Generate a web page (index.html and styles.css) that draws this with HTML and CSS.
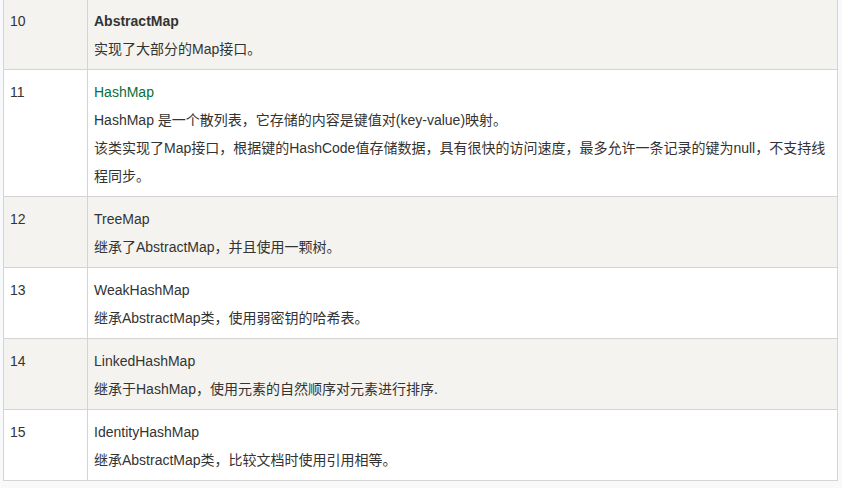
FILE: index.html
```html
<!DOCTYPE html>
<html lang="zh-CN">
<head>
<meta charset="utf-8">
<title>Map</title>
<link rel="stylesheet" href="styles.css">
</head>
<body>
<table class="reference">
  <tr class="odd">
    <td class="num">10</td>
    <td class="desc"><div class="name bold">AbstractMap</div><div>实现了大部分的Map接口。</div></td>
  </tr>
  <tr>
    <td class="num">11</td>
    <td class="desc"><div class="name green">HashMap</div><div>HashMap 是一个散列表，它存储的内容是键值对(key-value)映射。</div><div>该类实现了Map接口，根据键的HashCode值存储数据，具有很快的访问速度，最多允许一条记录的键为null，不支持线程同步。</div></td>
  </tr>
  <tr class="odd">
    <td class="num">12</td>
    <td class="desc"><div class="name">TreeMap</div><div>继承了AbstractMap，并且使用一颗树。</div></td>
  </tr>
  <tr>
    <td class="num">13</td>
    <td class="desc"><div class="name">WeakHashMap</div><div>继承AbstractMap类，使用弱密钥的哈希表。</div></td>
  </tr>
  <tr class="odd">
    <td class="num">14</td>
    <td class="desc"><div class="name">LinkedHashMap</div><div>继承于HashMap，使用元素的自然顺序对元素进行排序.</div></td>
  </tr>
  <tr>
    <td class="num">15</td>
    <td class="desc"><div class="name">IdentityHashMap</div><div>继承AbstractMap类，比较文档时使用引用相等。</div></td>
  </tr>
</table>
</body>
</html>
```
FILE: styles.css
```css
html, body {
  margin: 0;
  padding: 0;
  background: #f8f9fb;
}
body {
  font-family: "Liberation Sans", "Noto Sans CJK SC", sans-serif;
  font-size: 14px;
  color: #333;
  overflow: hidden;
}
.reference {
  margin: -2px 0 0 3px;
  width: 835px;
  border-collapse: collapse;
  background: #fff;
  border: 1px solid #d4d4d4;
}
.reference td {
  border: 1px solid #d4d4d4;
  padding: 8px 5px 6px 6px;
  line-height: 28px;
  vertical-align: top;
}
.reference tr.odd td {
  background: #f4f3ef;
}
.reference td.num {
  width: 72px;
}
.bold {
  font-weight: bold;
}
.green {
  color: #0b6e3a;
}
```
